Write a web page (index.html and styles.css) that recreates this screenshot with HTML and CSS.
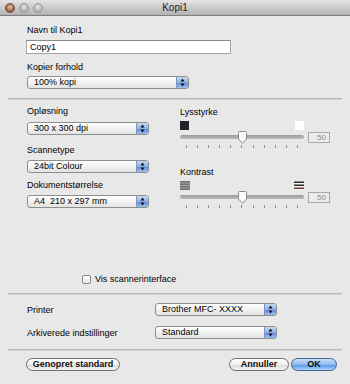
FILE: index.html
```html
<!DOCTYPE html>
<html lang="da">
<head>
    <meta charset="UTF-8">
    <title>Kopi1</title>
    <link rel="stylesheet" href="styles.css">
</head>
<body>
<div class="window">
    <div class="titlebar">
        <div class="lights">
            <span class="light close"></span>
            <span class="light"></span>
            <span class="light"></span>
        </div>
        <div class="title">Kopi1</div>
        <div></div>
    </div>

    <div class="sec top">
        <div class="label">Navn til Kopi1</div>
        <div class="textfield">Copy1</div>
        <div class="label gap8">Kopier forhold</div>
        <div class="popup w162 gap3">
            <span class="ptext">100% kopi</span>
            <span class="stepper"><svg width="5" height="9" viewBox="0 0 5 9"><path d="M2.5 0.5 L4.5 3.5 L0.5 3.5 Z M2.5 8.5 L4.5 5.5 L0.5 5.5 Z" fill="#111"/></svg></span>
        </div>
    </div>

    <div class="sep"></div>

    <div class="cols">
        <div class="col left">
            <div class="label gap6">Opløsning</div>
            <div class="popup w122 gap5">
                <span class="ptext">300 x 300 dpi</span>
                <span class="stepper"><svg width="5" height="9" viewBox="0 0 5 9"><path d="M2.5 0.5 L4.5 3.5 L0.5 3.5 Z M2.5 8.5 L4.5 5.5 L0.5 5.5 Z" fill="#111"/></svg></span>
            </div>
            <div class="label gap10">Scannetype</div>
            <div class="popup w122 gap4">
                <span class="ptext">24bit Colour</span>
                <span class="stepper"><svg width="5" height="9" viewBox="0 0 5 9"><path d="M2.5 0.5 L4.5 3.5 L0.5 3.5 Z M2.5 8.5 L4.5 5.5 L0.5 5.5 Z" fill="#111"/></svg></span>
            </div>
            <div class="label gap7">Dokumentstørrelse</div>
            <div class="popup w122 gap4">
                <span class="ptext">A4&nbsp; 210 x 297 mm</span>
                <span class="stepper"><svg width="5" height="9" viewBox="0 0 5 9"><path d="M2.5 0.5 L4.5 3.5 L0.5 3.5 Z M2.5 8.5 L4.5 5.5 L0.5 5.5 Z" fill="#111"/></svg></span>
            </div>
        </div>

        <div class="col right">
            <div class="label gap7">Lysstyrke</div>
            <div class="ends">
                <span class="sq dark"></span>
                <span class="sq white"></span>
            </div>
            <div class="track-row">
                <div class="track">
                    <svg class="knob" width="11" height="13" viewBox="0 0 11 13"><path d="M1.5 1.5 Q1.5 0.5 2.5 0.5 L8.5 0.5 Q9.5 0.5 9.5 1.5 L9.5 8 L5.5 12.3 L1.5 8 Z" fill="#fbfbfb" stroke="#8a8a8a"/></svg>
                </div>
                <div class="value">50</div>
            </div>
            <div class="ticks"><i></i><i></i><i></i><i></i><i></i><i></i><i></i><i></i><i></i><i></i><i></i></div>

            <div class="label gap18">Kontrast</div>
            <div class="ends">
                <svg width="10" height="9" viewBox="0 0 10 9"><rect width="10" height="9" fill="#a6a6a6"/><rect y="0" width="10" height="1.5" fill="#707070"/><rect y="2.5" width="10" height="1.5" fill="#707070"/><rect y="5" width="10" height="1.5" fill="#707070"/><rect y="7.5" width="10" height="1.5" fill="#707070"/></svg>
                <svg width="10" height="9" viewBox="0 0 10 9"><rect width="10" height="9" fill="#f4f4f4"/><rect y="0.5" width="10" height="1.5" fill="#2a2a2a"/><rect y="3.5" width="10" height="1.5" fill="#2a2a2a"/><rect y="6.5" width="10" height="1.5" fill="#6a3e34"/></svg>
            </div>
            <div class="track-row">
                <div class="track">
                    <svg class="knob" width="11" height="13" viewBox="0 0 11 13"><path d="M1.5 1.5 Q1.5 0.5 2.5 0.5 L8.5 0.5 Q9.5 0.5 9.5 1.5 L9.5 8 L5.5 12.3 L1.5 8 Z" fill="#fbfbfb" stroke="#8a8a8a"/></svg>
                </div>
                <div class="value">50</div>
            </div>
            <div class="ticks"><i></i><i></i><i></i><i></i><i></i><i></i><i></i><i></i><i></i><i></i><i></i></div>
        </div>
    </div>

    <div class="check-row">
        <span class="checkbox"></span>
        <span>Vis scannerinterface</span>
    </div>

    <div class="sep"></div>

    <div class="rows">
        <div class="row">
            <span class="rlabel">Printer</span>
            <div class="popup w122">
                <span class="ptext">Brother MFC- XXXX</span>
                <span class="stepper"><svg width="5" height="9" viewBox="0 0 5 9"><path d="M2.5 0.5 L4.5 3.5 L0.5 3.5 Z M2.5 8.5 L4.5 5.5 L0.5 5.5 Z" fill="#111"/></svg></span>
            </div>
        </div>
        <div class="row">
            <span class="rlabel">Arkiverede indstillinger</span>
            <div class="popup w122">
                <span class="ptext">Standard</span>
                <span class="stepper"><svg width="5" height="9" viewBox="0 0 5 9"><path d="M2.5 0.5 L4.5 3.5 L0.5 3.5 Z M2.5 8.5 L4.5 5.5 L0.5 5.5 Z" fill="#111"/></svg></span>
            </div>
        </div>
    </div>

    <div class="sep"></div>

    <div class="buttons">
        <button class="btn reset">Genopret standard</button>
        <div class="right-btns">
            <button class="btn cancel">Annuller</button>
            <button class="btn ok">OK</button>
        </div>
    </div>
</div>
</body>
</html>
```

FILE: styles.css
```css
* {
    box-sizing: border-box;
}
body {
    margin: 0;
    background: #e8e8e8;
    font-family: "Liberation Sans", Arial, sans-serif;
    font-size: 9px;
    color: #000;
}
.window {
    width: 350px;
    height: 384px;
    overflow: hidden;
    background: #e8e8e8;
}

/* title bar */
.titlebar {
    height: 16px;
    display: grid;
    grid-template-columns: 1fr auto 1fr;
    align-items: center;
    background: linear-gradient(#e4e4e4, #c6c6c6 60%, #b2b2b2);
    border-bottom: 1px solid #7e7e7e;
}
.lights {
    display: flex;
    gap: 4px;
    padding-left: 5px;
}
.light {
    width: 10px;
    height: 10px;
    border-radius: 50%;
    background: radial-gradient(circle at 50% 35%, #e6e6e6, #b4b4b4 60%, #9c9c9c);
    border: 1px solid #9a9a9a;
}
.light.close {
    background: radial-gradient(circle at 50% 40%, #e8c6a8, #a2684a 60%, #6e3e28);
    border-color: #6a4632;
}
.title {
    font-size: 10px;
    color: #222;
}

/* generic bits */
.label {
    line-height: 11px;
    height: 11px;
}
.gap3 { margin-top: 3px; }
.gap4 { margin-top: 4px; }
.gap5 { margin-top: 5px; }
.gap6 { margin-top: 6px; }
.gap7 { margin-top: 7px; }
.gap8 { margin-top: 8px; }
.gap10 { margin-top: 10px; }
.gap18 { margin-top: 18px; }

.sep {
    height: 2px;
    margin: 0 8px;
    border-top: 1px solid #b4b4b4;
    background: #d2d2d2;
}

.sec.top {
    padding: 9px 0 9px 27px;
}
.textfield {
    margin-top: 4px;
    margin-left: -1px;
    width: 205px;
    height: 14px;
    line-height: 12px;
    padding-left: 3px;
    background: #fff;
    border: 1px solid #a4a4a4;
    border-top-color: #8a8a8a;
}

/* popup buttons */
.popup {
    height: 13px;
    display: flex;
    align-items: stretch;
    border: 1px solid #8e8e8e;
    border-radius: 3px;
    background: linear-gradient(#ffffff, #f2f2f2 50%, #e2e2e2);
    overflow: hidden;
}
.w162 { width: 162px; }
.w122 { width: 122px; }
.ptext {
    flex: 1;
    line-height: 11px;
    padding-left: 6px;
    white-space: nowrap;
}
.stepper {
    width: 12px;
    display: flex;
    align-items: center;
    justify-content: center;
    border-left: 1px solid #7e97c0;
    background: linear-gradient(#c4d8f4, #8fb2e6 50%, #5d8ed8 55%, #9ec0f0);
}

/* two column area */
.cols {
    display: flex;
    padding-left: 27px;
    gap: 31px;
}
.col.left {
    width: 122px;
}
.col.right {
    width: 150px;
}
.ends {
    width: 124px;
    height: 9px;
    margin-top: 3px;
    display: flex;
    justify-content: space-between;
}
.sq {
    width: 9px;
    height: 9px;
}
.sq.dark {
    background: #25202a;
}
.sq.white {
    background: #fff;
}
.track-row {
    display: flex;
    align-items: center;
    gap: 4px;
    height: 14px;
}
.track {
    position: relative;
    width: 124px;
    height: 4px;
    border-radius: 2px;
    background: linear-gradient(#9c9c9c, #bcbcbc);
}
.knob {
    position: absolute;
    left: 57px;
    top: -4px;
}
.value {
    width: 22px;
    height: 11px;
    line-height: 9px;
    text-align: right;
    padding-right: 3px;
    font-size: 8px;
    color: #8a8a8a;
    border: 1px solid #a8a8a8;
    background: #ececec;
}
.ticks {
    width: 124px;
    padding: 0 6px;
    display: flex;
    justify-content: space-between;
    height: 4px;
    margin-top: 1px;
}
.ticks i {
    width: 1px;
    height: 3px;
    background: #8e8e8e;
}

/* checkbox */
.check-row {
    display: flex;
    align-items: center;
    gap: 4px;
    margin: 65px 0 9px 82px;
    height: 10px;
}
.checkbox {
    width: 9px;
    height: 9px;
    border: 1px solid #8a8a8a;
    border-radius: 2px;
    background: linear-gradient(#ffffff, #e6e6e6);
}

/* printer rows */
.rows {
    padding: 8px 0 10px 27px;
    display: flex;
    flex-direction: column;
    gap: 10px;
}
.row {
    display: flex;
    align-items: center;
}
.rlabel {
    width: 128px;
}

/* bottom buttons */
.buttons {
    display: flex;
    justify-content: space-between;
    padding: 7px 13px 0 26px;
}
.right-btns {
    display: flex;
    gap: 2px;
}
.btn {
    height: 13px;
    padding: 0;
    font-family: "Liberation Sans", Arial, sans-serif;
    font-size: 9px;
    font-weight: bold;
    color: #111;
    border: 1px solid #6e6e6e;
    border-radius: 7px;
    background: linear-gradient(#ffffff, #f0f0f0 50%, #dcdcdc 55%, #f4f4f4);
    line-height: 11px;
}
.btn.reset { width: 94px; }
.btn.cancel { width: 60px; }
.btn.ok {
    width: 46px;
    border-color: #43628f;
    background: linear-gradient(#c8e0fa, #8ebbef 50%, #5a9ae6 55%, #a8d2fa);
}
```
